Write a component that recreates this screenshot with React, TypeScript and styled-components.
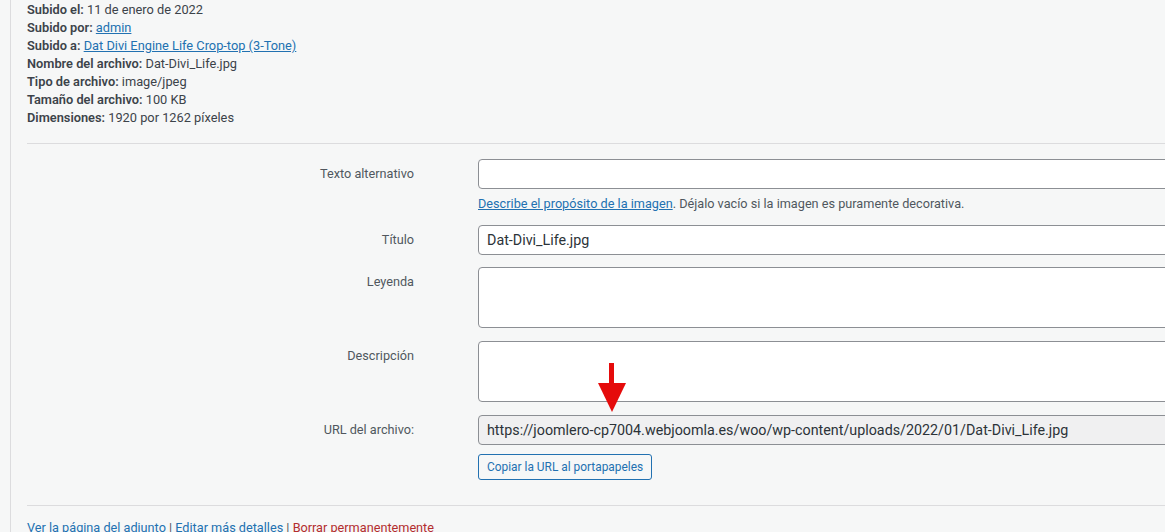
import React from "react";
import styled, { createGlobalStyle } from "styled-components";

const GlobalStyle = createGlobalStyle`
  html, body {
    margin: 0;
    padding: 0;
    background: #f6f7f7;
    overflow: hidden;
  }
  body {
    font-family: Roboto, "Liberation Sans", Arial, sans-serif;
    color: #3c434a;
  }
`;

const SPanel = styled.div`
  margin-left: 10px;
  width: 1260px;
  border-left: 1px solid #dcdcde;
  padding: 1px 0 0 16px;
  min-height: 532px;
  box-sizing: border-box;
`;

const SDetails = styled.div`
  font-size: 12.8px;
  line-height: 18px;
`;

const SDetailRow = styled.div`
  color: #3c434a;

  strong {
    font-weight: 600;
    color: #3c434a;
  }

  a {
    color: #2271b1;
    text-decoration: underline;
  }
`;

const SDivider = styled.hr<{ $top: number; $bottom: number }>`
  border: 0;
  border-top: 1px solid #dcdcde;
  margin: ${(p) => p.$top}px 0 ${(p) => p.$bottom}px;
`;

const SRow = styled.div<{ $gap: number }>`
  display: grid;
  grid-template-columns: 387px 1fr;
  column-gap: 64px;
  margin-bottom: ${(p) => p.$gap}px;
`;

const SLabel = styled.label`
  text-align: right;
  font-size: 12.7px;
  line-height: 30px;
  color: #50575e;
  align-self: start;
`;

const SField = styled.div`
  display: flex;
  flex-direction: column;
`;

const SInput = styled.input<{ $readOnly?: boolean }>`
  box-sizing: border-box;
  height: 30px;
  width: 100%;
  border: 1px solid #8c8f94;
  border-radius: 4px;
  padding: 0 8px;
  font-family: inherit;
  font-size: 14.3px;
  color: #2c3338;
  background: ${(p) => (p.$readOnly ? "#f0f0f1" : "#fff")};
  outline: none;
`;

const STextarea = styled.textarea`
  box-sizing: border-box;
  height: 61px;
  width: 100%;
  border: 1px solid #8c8f94;
  border-radius: 4px;
  background: #fff;
  resize: none;
  outline: none;
  display: block;
`;

const SHelp = styled.p`
  margin: 7px 0 0;
  font-size: 12.7px;
  line-height: 16px;
  color: #50575e;

  a {
    color: #2271b1;
    text-decoration: underline;
  }
`;

const SButton = styled.button<{ $top: number }>`
  align-self: flex-start;
  box-sizing: border-box;
  height: 26px;
  margin-top: ${(p) => p.$top}px;
  padding: 0 8px;
  border: 1px solid #2271b1;
  border-radius: 3px;
  background: #f6f7f7;
  color: #2271b1;
  font-family: inherit;
  font-size: 11.9px;
`;

const SUrlWrap = styled.div`
  position: relative;
`;

const SArrow = styled.svg`
  position: absolute;
  left: 119px;
  top: -52px;
`;

const SFooter = styled.div`
  font-size: 12.7px;
  line-height: 18px;
  color: #50575e;

  a {
    color: #2271b1;
    text-decoration: none;
  }
`;

const SDelete = styled.a`
  && {
    color: #b32d2e;
  }
`;

export default function App() {
  return (
    <>
      <GlobalStyle />
      <SPanel>
        <SDetails>
          <SDetailRow>
            <strong>Subido el:</strong> 11 de enero de 2022
          </SDetailRow>
          <SDetailRow>
            <strong>Subido por:</strong> <a href="#">admin</a>
          </SDetailRow>
          <SDetailRow>
            <strong>Subido a:</strong>{" "}
            <a href="#">Dat Divi Engine Life Crop-top (3-Tone)</a>
          </SDetailRow>
          <SDetailRow>
            <strong>Nombre del archivo:</strong> Dat-Divi_Life.jpg
          </SDetailRow>
          <SDetailRow>
            <strong>Tipo de archivo:</strong> image/jpeg
          </SDetailRow>
          <SDetailRow>
            <strong>Tamaño del archivo:</strong> 100 KB
          </SDetailRow>
          <SDetailRow>
            <strong>Dimensiones:</strong> 1920 por 1262 píxeles
          </SDetailRow>
        </SDetails>

        <SDivider $top={16} $bottom={15} />

        <SRow $gap={13}>
          <SLabel>Texto alternativo</SLabel>
          <SField>
            <SInput />
            <SHelp>
              <a href="#">Describe el propósito de la imagen</a>. Déjalo vacío si la
              imagen es puramente decorativa.
            </SHelp>
          </SField>
        </SRow>

        <SRow $gap={12}>
          <SLabel>Título</SLabel>
          <SField>
            <SInput defaultValue="Dat-Divi_Life.jpg" />
          </SField>
        </SRow>

        <SRow $gap={13}>
          <SLabel>Leyenda</SLabel>
          <SField>
            <STextarea />
          </SField>
        </SRow>

        <SRow $gap={13}>
          <SLabel>Descripción</SLabel>
          <SField>
            <STextarea />
          </SField>
        </SRow>

        <SRow $gap={0}>
          <SLabel>URL del archivo:</SLabel>
          <SField>
            <SUrlWrap>
              <SInput
                $readOnly
                readOnly
                defaultValue="https://joomlero-cp7004.webjoomla.es/woo/wp-content/uploads/2022/01/Dat-Divi_Life.jpg"
              />
              <SArrow width="30" height="50" viewBox="0 0 30 50">
                <rect x="12" y="0" width="5" height="22" fill="#e50b0b" />
                <polygon points="1,20 29,20 15,49" fill="#e50b0b" />
              </SArrow>
            </SUrlWrap>
            <SButton $top={9}>Copiar la URL al portapapeles</SButton>
          </SField>
        </SRow>

        <SDivider $top={25} $bottom={13} />

        <SFooter>
          <a href="#">Ver la página del adjunto</a> | <a href="#">Editar más detalles</a> |{" "}
          <SDelete href="#">Borrar permanentemente</SDelete>
        </SFooter>
      </SPanel>
    </>
  );
}
